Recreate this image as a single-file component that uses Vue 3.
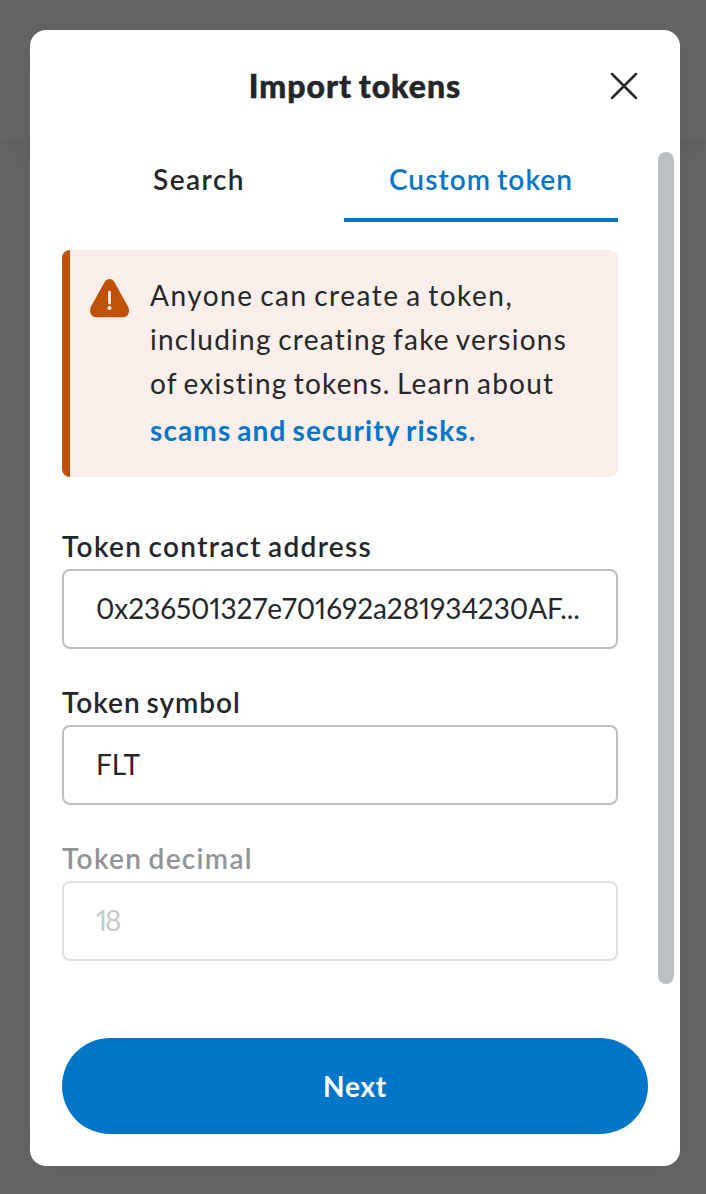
<script setup>
import { ref } from 'vue'

const tabs = [
  { id: 'search', label: 'Search' },
  { id: 'custom', label: 'Custom token' },
]
const active = ref('custom')
const fields = [
  { id: 'address', label: 'Token contract address', value: '0x236501327e701692a281934230AF...' },
  { id: 'symbol', label: 'Token symbol', value: 'FLT' },
  { id: 'decimal', label: 'Token decimal', value: '18', disabled: true },
]
</script>

<template>
  <div class="overlay">
    <section class="modal">
      <header class="header">
        <h1 class="title">Import tokens</h1>
        <button class="close" aria-label="Close">
          <svg width="28" height="28" viewBox="0 0 28 28">
            <path d="M2 2L26 26M26 2L2 26" fill="none" stroke="#24272a" stroke-width="2.5" stroke-linecap="round" />
          </svg>
        </button>
      </header>
      <div class="body">
        <div class="content">
          <nav class="tabs">
            <button
              v-for="t in tabs"
              :key="t.id"
              class="tab"
              :class="[t.id, { active: active === t.id }]"
              @click="active = t.id"
            ><span>{{ t.label }}</span></button>
          </nav>
          <div class="banner">
            <svg class="warning" width="40" height="40" viewBox="0 0 40 40">
              <path d="M14.500 4.200C17 0 22 0 24.500 4.200L38 28.500C40.500 34 38 39.300 32.500 39.300H6.500C1 39.300-1.500 34 1 28.500Z" fill="#bf5208" />
              <path d="M19.500 14.200V25" stroke="#f9eee9" stroke-width="2.900" stroke-linecap="round" />
              <circle cx="19.500" cy="30" r="2" fill="#f9eee9" />
            </svg>
            <p class="message">
              <span class="line l1">Anyone can create a token,</span>
              <span class="line l2">including creating fake versions</span>
              <span class="line l3">of existing tokens. Learn about</span>
              <a class="line link">scams and security risks.</a>
            </p>
          </div>
          <div v-for="f in fields" :key="f.id" class="field" :class="[f.id, { disabled: f.disabled }]">
            <div class="label">{{ f.label }}</div>
            <div class="input"><span>{{ f.value }}</span></div>
          </div>
        </div>
        <div class="scrollbar"></div>
      </div>
      <footer class="footer">
        <button class="next">Next</button>
      </footer>
    </section>
  </div>
</template>

<style>
body {
  margin: 0;
}
</style>

<style scoped>
* {
  box-sizing: border-box;
}
.overlay {
  width: 706px;
  height: 1194px;
  padding: 30px 26px 28px 30px;
  overflow: hidden;
  background: linear-gradient(#666 0 139px, #636363 139px, #666 165px);
  font-family: Lato, "Noto Sans", sans-serif;
  font-size: 28px;
  font-weight: 400;
  color: #24272a;
  white-space: nowrap;
  word-spacing: -2px;
}
button {
  font: inherit;
  color: inherit;
  word-spacing: inherit;
  border: 0;
  background: none;
  padding: 0;
}
.modal {
  height: 1136px;
  background: #fff;
  border-radius: 16px;
  box-shadow: 0 0 40px rgba(0, 0, 0, 0.1);
  display: flex;
  flex-direction: column;
}
.header {
  height: 110px;
  flex: none;
  display: grid;
  grid-template-columns: 80px 1fr 80px;
  align-items: center;
  padding: 0 16px;
}
.title {
  grid-column: 2;
  margin: 2px 0 0;
  text-align: center;
  font-size: 32px;
  font-weight: 900;
  line-height: 48px;
  letter-spacing: 1px;
  -webkit-text-stroke: 0.5px #24272a;
}
.close {
  width: 28px;
  height: 28px;
  margin: 2px 0 0 26px;
}
.close svg {
  display: block;
}
.body {
  height: 866px;
  flex: none;
  display: flex;
  justify-content: space-between;
  padding: 0 6px 0 32px;
}
.content {
  width: 556px;
}
.tabs {
  display: flex;
  height: 82px;
}
.tab {
  height: 82px;
  line-height: 79px;
  font-weight: 600;
  border-bottom: 4px solid transparent;
}
.tab.search {
  width: 274px;
  letter-spacing: 1.5px;
}
.tab.custom {
  width: 274px;
  margin-left: 8px;
  letter-spacing: 1.08px;
}
.tab.active {
  color: #0376c9;
  border-color: #0376c9;
}
.banner {
  height: 227px;
  margin-top: 28px;
  padding: 23px 16px 0 20px;
  display: flex;
  border-left: 8px solid #bf5208;
  border-radius: 8px;
  background: #f9eee9;
}
.warning {
  flex: none;
  margin: 5px 20px 0 0;
}
.message {
  margin: 0;
}
.line {
  display: block;
  line-height: 44px;
}
.l1 {
  letter-spacing: 1.5px;
}
.l2 {
  letter-spacing: 1.25px;
}
.l3 {
  letter-spacing: 1.19px;
}
.link {
  margin-top: 3px;
  color: #0376c9;
  font-weight: 700;
  letter-spacing: 1.12px;
}
.field {
  margin-top: 32px;
}
.banner + .field {
  margin-top: 48px;
}
.label {
  height: 44px;
  line-height: 43px;
  font-weight: 600;
  letter-spacing: 0.98px;
}
.address .label,
.decimal .label {
  letter-spacing: 1.31px;
}
.input {
  height: 80px;
  padding-left: 32px;
  line-height: 75px;
  border: 2px solid #bbc0c5;
  border-radius: 8px;
  font-variant-numeric: proportional-nums;
}
.address .input {
  letter-spacing: -0.05px;
}
.disabled .label {
  color: #929394;
}
.disabled .input {
  color: #c8c9ca;
  border-color: #dedfe0;
  letter-spacing: -2px;
}
.scrollbar {
  width: 16px;
  height: 832px;
  margin-top: 12px;
  border-radius: 8px;
  background: #bbc0c5;
}
.footer {
  padding: 32px;
}
.next {
  display: block;
  width: 586px;
  height: 96px;
  border-radius: 48px;
  background: #0376c9;
  color: #fff;
  font-weight: 700;
  letter-spacing: 0.8px;
}
</style>
